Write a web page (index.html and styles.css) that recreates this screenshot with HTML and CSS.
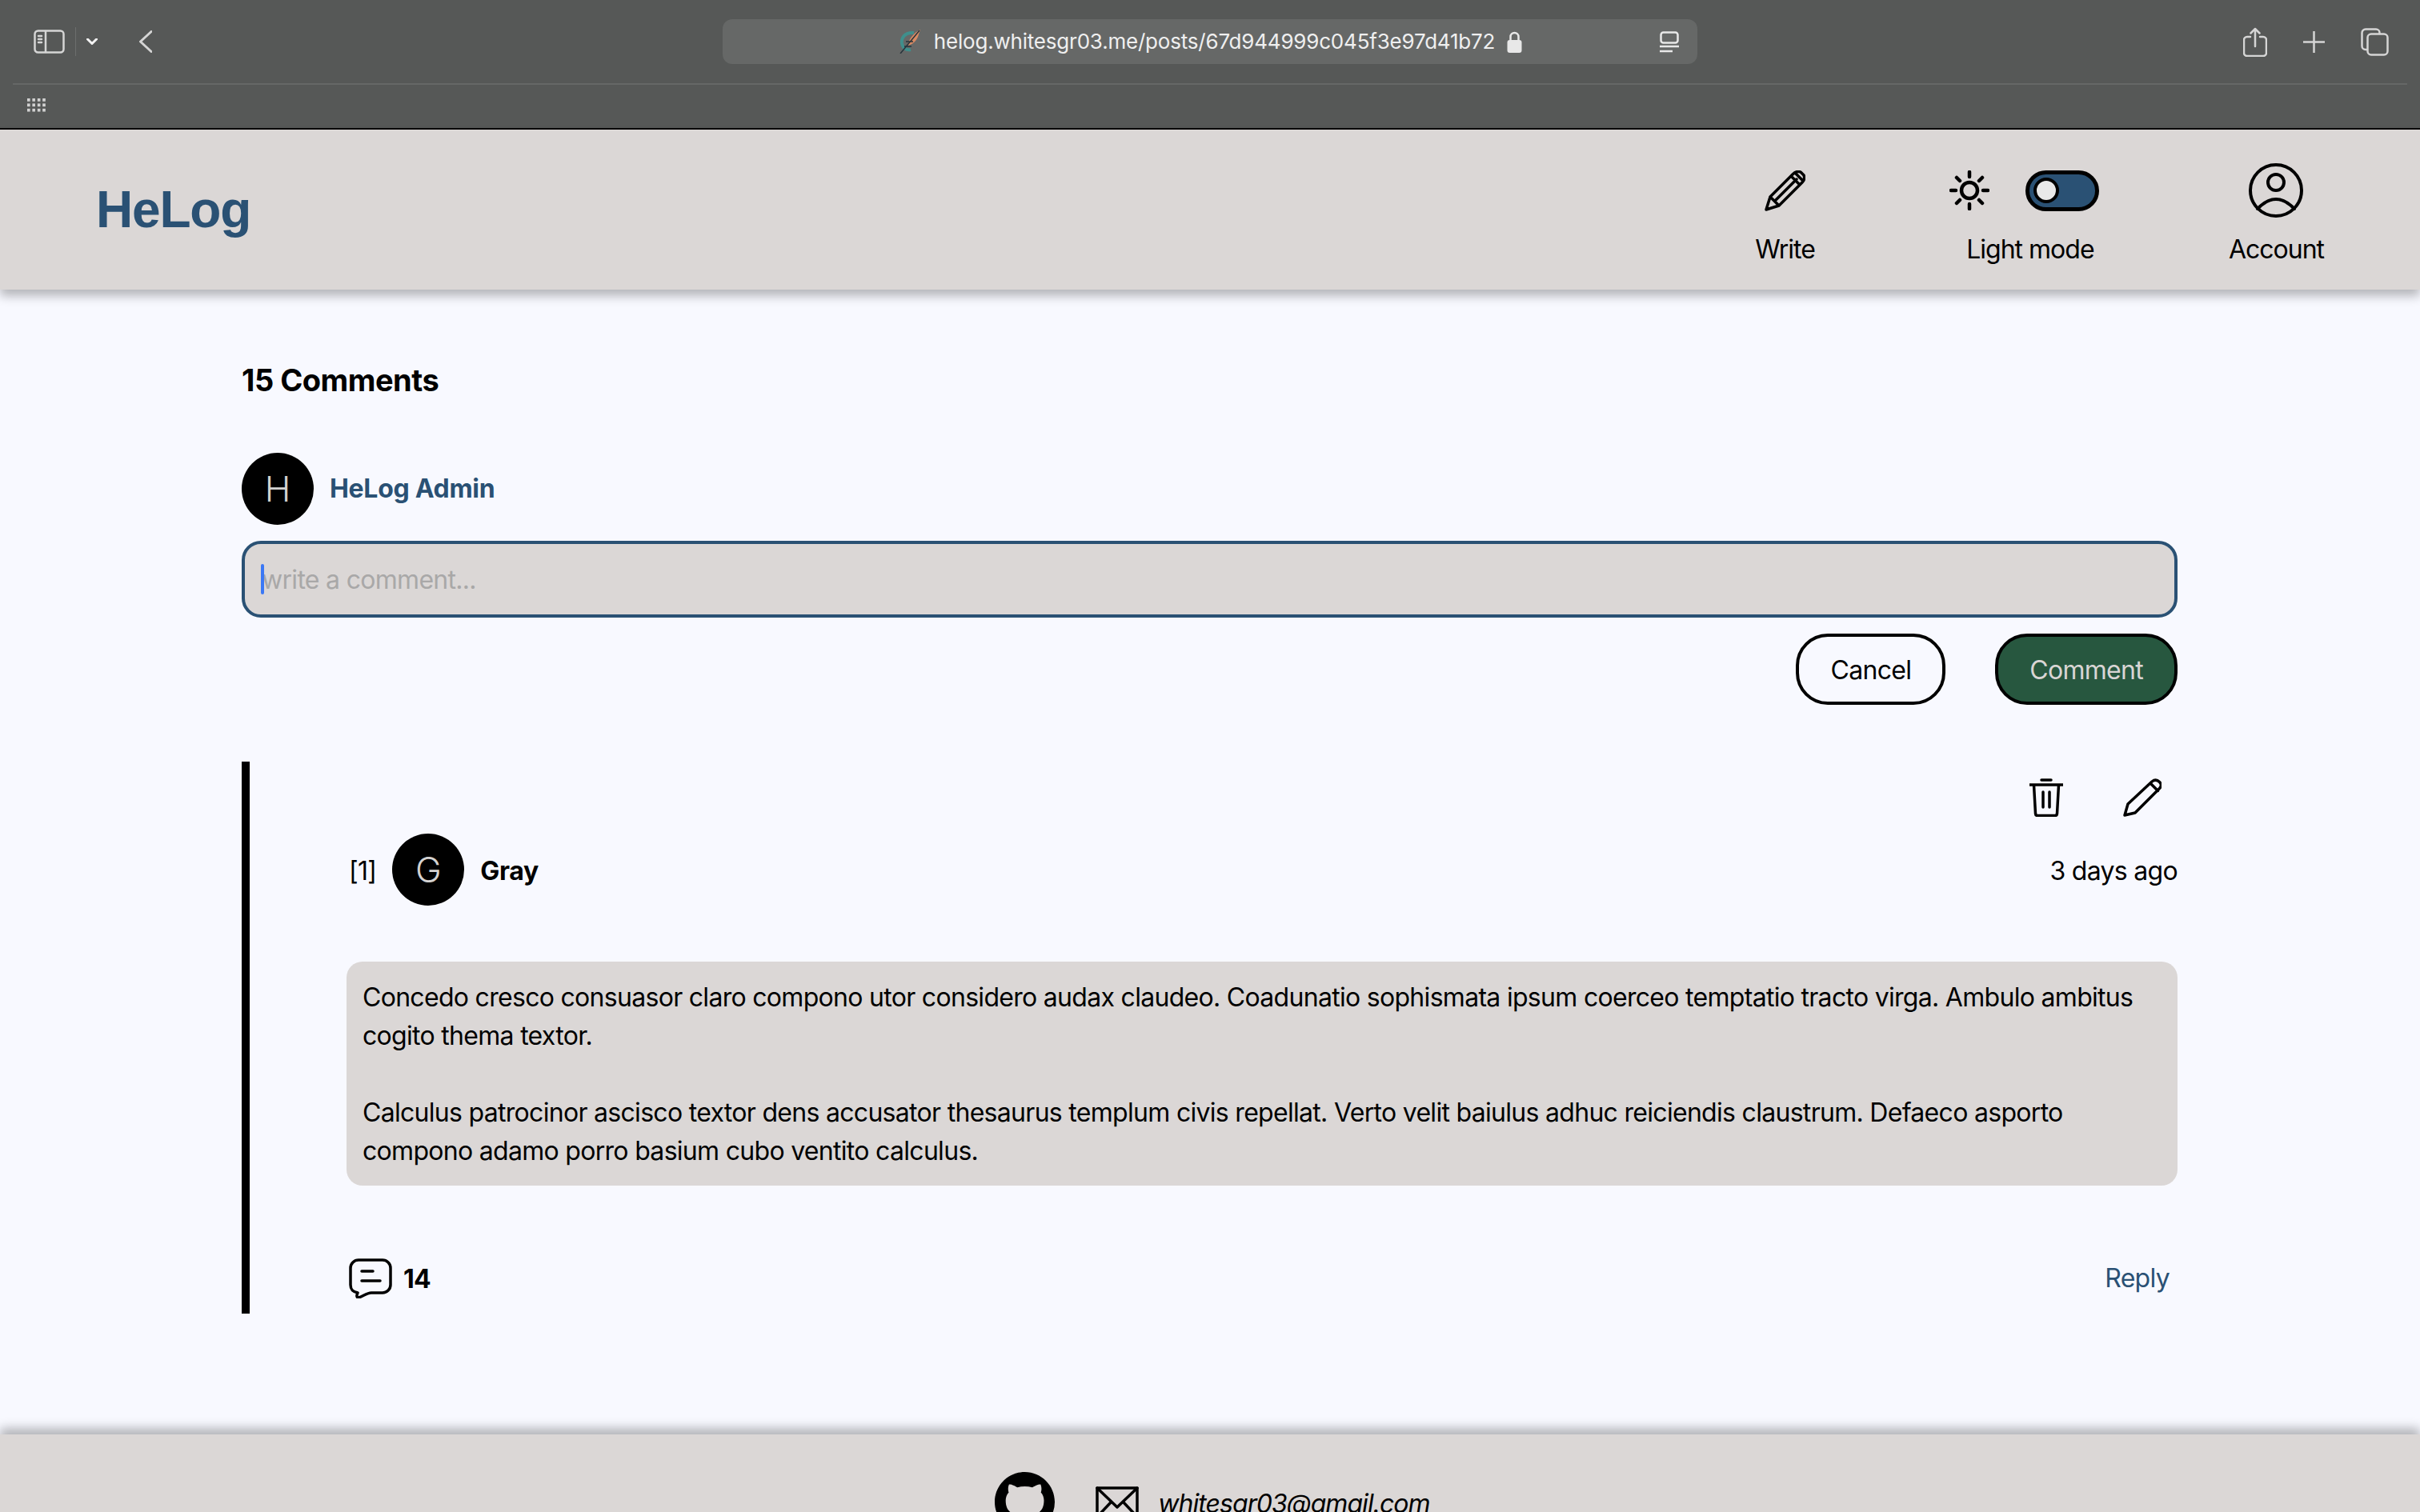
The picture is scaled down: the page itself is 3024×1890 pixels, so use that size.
FILE: index.html
```html
<!DOCTYPE html>
<html lang="en">
<head>
    <meta charset="UTF-8">
    <meta name="viewport" content="width=device-width, initial-scale=1.0">
    <title>HeLog</title>
    <link rel="stylesheet" href="styles.css">
</head>
<body>

    <!-- Browser toolbar -->
    <div class="browser">
        <div class="toolbar">
            <div class="toolbar-left">
                <svg class="chrome-icon" width="39" height="30" viewBox="0 0 39 30">
                    <rect x="1.5" y="1.5" width="36" height="27" rx="4"/>
                    <path d="M15 2v26M6 8h4M6 12h4M6 16h4"/>
                </svg>
                <span class="toolbar-divider"></span>
                <svg class="chrome-icon chevron" width="14" height="8" viewBox="0 0 14 8">
                    <path d="M1.5 1l5.5 5.5L12.500 1"/>
                </svg>
                <svg class="chrome-icon back" width="16" height="28" viewBox="0 0 16 28">
                    <path d="M15 1.500L1.500 14 15 26.500"/>
                </svg>
            </div>
            <div class="address">
                <svg class="favicon" width="29" height="30" viewBox="0 0 29 30">
                    <path d="M20 4C9 3 4 10 5 17c1 6 5 9 11 8" fill="none" stroke="#3f8f8c" stroke-width="4"/>
                    <path d="M28 0C20 4 14 11 12 20c6-1 11-6 13-11z" fill="#d98a63"/>
                    <path d="M27 1L3 30M10 15h9M8 21h9" fill="none" stroke="#26343c" stroke-width="1.500"/>
                </svg>
                <span class="url">helog.whitesgr03.me/posts/67d944999c045f3e97d41b72</span>
                <svg class="lock" width="19" height="27" viewBox="0 0 19 27">
                    <path d="M4.500 12V7a5 5 0 0 1 10 0v5" fill="none" stroke="#e8e8e8" stroke-width="2.500"/>
                    <rect x="0.500" y="11" width="18" height="16" rx="3" fill="#e8e8e8"/>
                </svg>
                <svg class="reader" width="24" height="27" viewBox="0 0 24 27">
                    <rect x="1.500" y="1.500" width="21" height="13" rx="3" fill="none" stroke="#e8e8e8" stroke-width="2.500"/>
                    <path d="M0 19h24M0 25h16" stroke="#e8e8e8" stroke-width="2.500"/>
                </svg>
            </div>
            <div class="toolbar-right">
                <svg class="chrome-icon" width="30" height="37" viewBox="0 0 30 37">
                    <path d="M9 12H5a4 4 0 0 0-4 4v16a4 4 0 0 0 4 4h20a4 4 0 0 0 4-4V16a4 4 0 0 0-4-4h-4M15 24V2M9.500 7.500L15 2l5.500 5.500"/>
                </svg>
                <svg class="chrome-icon" width="27" height="27" viewBox="0 0 27 27">
                    <path d="M13.500 0v27M0 13.500h27"/>
                </svg>
                <svg class="chrome-icon" width="35" height="35" viewBox="0 0 35 35">
                    <path d="M7 27H6a4.500 4.500 0 0 1-4.500-4.500V6A4.500 4.500 0 0 1 6 1.500h13A4.500 4.500 0 0 1 23.500 6v1"/>
                    <rect x="8.500" y="7.500" width="25" height="26" rx="4.500"/>
                </svg>
            </div>
        </div>
        <div class="toolbar-line"></div>
        <div class="bookmarks">
            <svg width="23" height="17" viewBox="0 0 23 17">
                <defs>
                    <pattern id="dots" width="6.400" height="6.400" patternUnits="userSpaceOnUse">
                        <rect width="3.600" height="3.800" fill="#d2d2d2"/>
                    </pattern>
                </defs>
                <rect width="23" height="17" fill="url(#dots)"/>
            </svg>
        </div>
    </div>

    <div class="page">

        <header class="site-header">
            <a class="logo">HeLog</a>
            <nav class="nav">
                <div class="nav-item write">
                    <div class="nav-icons">
                        <svg class="line-icon thin" width="51" height="51" viewBox="0 0 51 51">
                            <path d="M2 49l5-16L35 5q5-5 10-3l4 4q2 5-2 9L18 44zM7 33l11 11M13 38l27-27M33 7l10 10M38 3l10 10"/>
                        </svg>
                    </div>
                    <span class="nav-label">Write</span>
                </div>
                <div class="nav-item">
                    <div class="nav-icons">
                        <svg class="line-icon sun" width="50" height="50" viewBox="0 0 50 50">
                            <circle cx="25" cy="25" r="10"/>
                            <path d="M25 2v6M25 42v6M2 25h6M42 25h6M9 9l4 4M37 37l4 4M9 41l4-4M37 13l4-4"/>
                        </svg>
                        <div class="toggle"><span class="knob"></span></div>
                    </div>
                    <span class="nav-label mode-label">Light mode</span>
                </div>
                <div class="nav-item">
                    <div class="nav-icons">
                        <svg class="line-icon" width="68" height="68" viewBox="0 0 68 68">
                            <circle cx="34" cy="34" r="32"/>
                            <circle cx="34" cy="24" r="10"/>
                            <path d="M11 57q23-24 46 0"/>
                        </svg>
                    </div>
                    <span class="nav-label">Account</span>
                </div>
            </nav>
        </header>

        <main class="comments">
            <h2 class="comments-title">15 Comments</h2>

            <form class="comment-form">
                <div class="user-row">
                    <div class="avatar">H</div>
                    <strong class="admin-name">HeLog Admin</strong>
                </div>
                <div class="input-wrap">
                    <input class="comment-input" type="text" placeholder="write a comment...">
                    <span class="caret"></span>
                </div>
                <div class="form-buttons">
                    <button class="btn" type="button">Cancel</button>
                    <button class="btn btn-green" type="button">Comment</button>
                </div>
            </form>

            <article class="thread">
                <div class="thread-actions">
                    <svg class="line-icon thin" width="42" height="48" viewBox="0 0 42 48">
                        <path d="M0 8h42M15 2h12M5.500 8l2 36q.2 2.500 2.500 2.500h22q2.300 0 2.500-2.500l2-36M17 17v19M25 17v19"/>
                    </svg>
                    <svg class="line-icon thin" width="48" height="48" viewBox="0 0 48 48">
                        <path d="M2 46l4-14L36 4q5-4 9.500.5T44 14L15 43zM34 6l9.500 9.500"/>
                    </svg>
                </div>
                <div class="comment-head">
                    <div class="user-row">
                        <span class="comment-no">[1]</span>
                        <div class="avatar">G</div>
                        <strong>Gray</strong>
                    </div>
                    <time>3 days ago</time>
                </div>
                <div class="comment-body">
                    <p>Concedo cresco consuasor claro compono utor considero audax claudeo. Coadunatio sophismata ipsum coerceo temptatio tracto virga. Ambulo ambitus cogito thema textor.</p>
                    <p>Calculus patrocinor ascisco textor dens accusator thesaurus templum civis repellat. Verto velit baiulus adhuc reiciendis claustrum. Defaeco asporto compono adamo porro basium cubo ventito calculus.</p>
                </div>
                <div class="comment-foot">
                    <div class="reply-count">
                        <svg class="line-icon thin" width="54" height="50" viewBox="0 0 54 50">
                            <path d="M12 2h30a10 10 0 0 1 10 10v21a10 10 0 0 1-10 10H28c-6 0-11 5-16 6-2 .5-3-2-1-6-5-1-9-3-9-10V12A10 10 0 0 1 12 2zM16 16h14M16 28h23"/>
                        </svg>
                        <strong>14</strong>
                    </div>
                    <a class="reply-link">Reply</a>
                </div>
            </article>
        </main>

        <footer class="site-footer">
            <svg class="github" width="75" height="75" viewBox="0 0 16 16">
                <path d="M8 0C3.580 0 0 3.580 0 8c0 3.540 2.290 6.530 5.470 7.590.4.070.55-.17.55-.38 0-.19-.01-.82-.01-1.490-2.010.37-2.530-.49-2.690-.94-.09-.23-.48-.94-.82-1.130-.28-.15-.68-.52-.01-.53.63-.01 1.080.58 1.230.82.72 1.210 1.870.87 2.330.66.070-.52.28-.87.51-1.070-1.780-.2-3.640-.89-3.640-3.950 0-.87.31-1.590.82-2.150-.08-.2-.36-1.020.08-2.120 0 0 .67-.21 2.200.82.64-.18 1.320-.27 2-.27.68 0 1.360.09 2 .27 1.530-1.040 2.200-.82 2.200-.82.44 1.100.16 1.920.08 2.120.51.56.82 1.270.82 2.150 0 3.070-1.870 3.750-3.650 3.950.29.25.54.73.54 1.480 0 1.070-.01 1.930-.01 2.200 0 .21.15.46.55.38A8.013 8.013 0 0 0 16 8c0-4.420-3.580-8-8-8z"/>
            </svg>
            <div class="mail">
                <svg class="line-icon thin" width="54" height="40" viewBox="0 0 54 40">
                    <rect x="2" y="2" width="50" height="36"/>
                    <path d="M2 2l25 24L52 2M2 38l17-18M52 38L35 20"/>
                </svg>
                <em>whitesgr03@gmail.com</em>
            </div>
        </footer>

    </div>

</body>
</html>
```

FILE: styles.css
```css
/* General Styles */
html, body {
    height: 100%;
    overflow: hidden;
}

body {
    margin: 0;
    font-family: 'Inter', 'Liberation Sans', sans-serif;
    font-size: 32px;
    line-height: 48px;
    letter-spacing: -0.7px;
    color: #000;
    background-color: #f8f9ff;
}

p {
    margin: 0;
}

svg {
    display: block;
    flex-shrink: 0;
}

/* Browser Toolbar */
.browser {
    height: 160px;
    background: #565857;
    border-bottom: 2px solid #000;
}

.toolbar {
    display: grid;
    grid-template-columns: 903px 1218px 1fr;
    height: 104px;
    padding-top: 24px;
    box-sizing: border-box;
}

.toolbar-left,
.toolbar-right {
    display: flex;
    align-items: center;
    height: 56px;
}

.toolbar-left {
    padding-left: 42px;
}

.toolbar-right {
    justify-content: flex-end;
    gap: 45px;
    padding-right: 39px;
}

.toolbar-divider {
    width: 1px;
    height: 36px;
    margin: 0 13px;
    background: #6c6e6d;
}

.chrome-icon {
    fill: none;
    stroke: #d5d5d5;
    stroke-width: 2.5;
    stroke-linecap: round;
    stroke-linejoin: round;
}

.chevron {
    stroke: #f2f2f2;
    stroke-width: 3;
}

.back {
    margin-left: 52px;
    stroke-width: 3;
}

.address {
    position: relative;
    display: flex;
    align-items: center;
    justify-content: center;
    height: 56px;
    background: #666867;
    border-radius: 12px;
}

.favicon {
    margin-right: 16px;
}

.url {
    font-size: 26px;
    letter-spacing: -0.2px;
    color: #efefef;
    white-space: nowrap;
}

.lock {
    margin-left: 15px;
}

.reader {
    position: absolute;
    right: 23px;
    top: 15px;
}

.toolbar-line {
    height: 2px;
    margin: 0 16px;
    background: #666867;
}

.bookmarks {
    padding: 17px 0 0 34px;
}

/* Header */
.site-header {
    display: flex;
    justify-content: space-between;
    height: 200px;
    padding: 0 120px;
    background: #dbd7d6;
    box-shadow: 0 8px 12px rgba(0, 0, 0, 0.27);
    position: relative;
}

.logo {
    align-self: center;
    font-family: 'Liberation Sans', sans-serif;
    font-size: 64px;
    font-weight: bold;
    letter-spacing: -1.2px;
    color: #2a5174;
}

.nav {
    display: flex;
    gap: 162px;
    padding-top: 42px;
}

.nav-item {
    display: flex;
    flex-direction: column;
    align-items: center;
}

.nav-item.write {
    margin-right: 6px;
}

.nav-label {
    letter-spacing: -1px;
}

.mode-label {
    margin-left: 15px;
}

.nav-icons {
    display: flex;
    align-items: center;
    gap: 45px;
    height: 68px;
    margin-bottom: 16px;
}

.line-icon {
    fill: none;
    stroke: #000;
    stroke-width: 4;
    stroke-linecap: round;
    stroke-linejoin: round;
}

.line-icon.thin {
    stroke-width: 3.5;
}

.line-icon.sun {
    stroke-width: 4.5;
}

.toggle {
    display: flex;
    align-items: center;
    width: 92px;
    height: 51px;
    padding-left: 5px;
    box-sizing: border-box;
    background: #2a5174;
    border: 5px solid #000;
    border-radius: 26px;
}

.knob {
    width: 32px;
    height: 32px;
    box-sizing: border-box;
    background: #e9e9e9;
    border: 4px solid #000;
    border-radius: 50%;
}

/* Comments */
.comments {
    padding: 89px 303px 0 302px;
}

.comments-title {
    margin: 0 0 67px;
    font-size: 38px;
    line-height: 48px;
    font-weight: 700;
    letter-spacing: -0.5px;
}

.user-row {
    display: flex;
    align-items: center;
    gap: 20px;
}

.avatar {
    display: flex;
    align-items: center;
    justify-content: center;
    width: 90px;
    height: 90px;
    background: #000;
    border-radius: 50%;
    font-size: 44px;
    font-weight: 300;
    letter-spacing: 0;
    color: #d4d2d1;
}

.user-row strong {
    font-weight: 700;
    letter-spacing: -0.3px;
}

.admin-name {
    color: #2a5174;
}

.input-wrap {
    position: relative;
    margin-top: 20px;
}

.comment-input {
    display: block;
    width: 100%;
    height: 96px;
    padding: 0 21px;
    box-sizing: border-box;
    background: #dbd7d6;
    border: 4px solid #2a5174;
    border-radius: 24px;
    outline: none;
    font-family: inherit;
    font-size: 32px;
    letter-spacing: inherit;
    color: #000;
}

.comment-input::placeholder {
    color: #a9a8a8;
    opacity: 1;
}

.caret {
    position: absolute;
    left: 24px;
    top: 29px;
    width: 4px;
    height: 38px;
    background: #3b78f5;
    border-radius: 2px;
}

.form-buttons {
    display: flex;
    justify-content: flex-end;
    gap: 62px;
    margin-top: 20px;
}

.btn {
    height: 89px;
    padding: 2px 39px 0;
    background: transparent;
    border: 4px solid #000;
    border-radius: 40px;
    font-family: inherit;
    font-size: 32px;
    letter-spacing: inherit;
    color: #000;
}

.btn-green {
    background: #27573f;
    color: #d9d5d4;
}

/* Thread */
.thread {
    margin-top: 71px;
    padding: 21px 0 19px 121px;
    border-left: 10px solid #000;
}

.thread-actions {
    display: flex;
    justify-content: flex-end;
    gap: 75px;
    padding-right: 20px;
}

.comment-head {
    display: flex;
    justify-content: space-between;
    align-items: center;
    margin-top: 21px;
    padding-left: 3px;
}

.comment-head time,
.comment-head strong,
.comment-no {
    padding-top: 3px;
}

.comment-body {
    display: flex;
    flex-direction: column;
    gap: 48px;
    margin-top: 70px;
    padding: 21px 20px 19px;
    background: #dbd7d6;
    border-radius: 20px;
}

.comment-foot {
    display: flex;
    justify-content: space-between;
    align-items: center;
    margin-top: 90px;
    padding: 0 10px 0 3px;
}

.reply-count {
    display: flex;
    align-items: center;
    gap: 14px;
}

.reply-count strong {
    padding-top: 3px;
}

.reply-link {
    color: #2a5174;
}

/* Footer */
.site-footer {
    display: flex;
    justify-content: center;
    align-items: center;
    gap: 51px;
    margin-top: 151px;
    padding: 47px 0 47px 6px;
    background: #dbd7d6;
    box-shadow: 0 -8px 12px rgba(0, 0, 0, 0.27);
}

.mail {
    display: flex;
    align-items: center;
    gap: 24px;
}

.mail em {
    padding-top: 4px;
    letter-spacing: -0.95px;
}
```
